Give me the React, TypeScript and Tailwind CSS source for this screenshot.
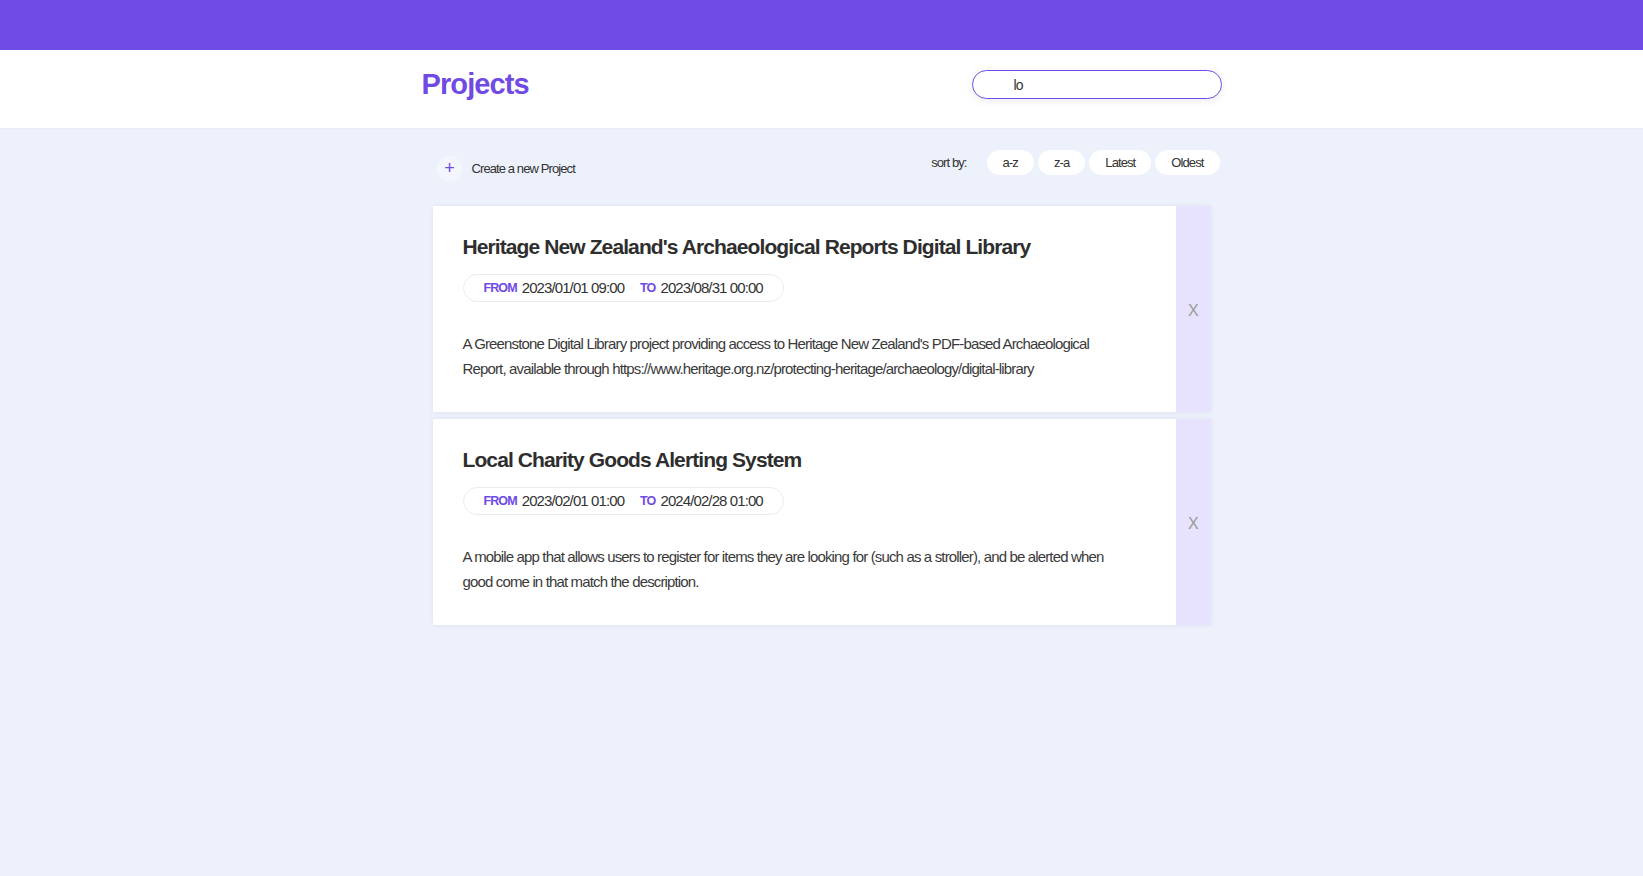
import React, { useState } from 'react';

type Project = {
  id: number;
  title: string;
  from: string;
  to: string;
  description: string;
};

const projects: Project[] = [
  {
    id: 1,
    title: "Heritage New Zealand's Archaeological Reports Digital Library",
    from: '2023/01/01 09:00',
    to: '2023/08/31 00:00',
    description:
      "A Greenstone Digital Library project providing access to Heritage New Zealand's PDF-based Archaeological Report, available through https://www.heritage.org.nz/protecting-heritage/archaeology/digital-library",
  },
  {
    id: 2,
    title: 'Local Charity Goods Alerting System',
    from: '2023/02/01 01:00',
    to: '2024/02/28 01:00',
    description:
      'A mobile app that allows users to register for items they are looking for (such as a stroller), and be alerted when good come in that match the description.',
  },
];

const sortOptions = ['a-z', 'z-a', 'Latest', 'Oldest'];

const ProjectCard: React.FC<{ project: Project }> = ({ project }) => (
  <div className="flex bg-white shadow-[0_0_5px_rgba(0,0,0,0.07)]">
    <div className="flex-1 pt-[30px] pb-[31px] pl-[30px] pr-[55px]">
      <h2 className="text-[21px] leading-[22px] font-bold text-[#2e2e2e]">{project.title}</h2>
      <div className="mt-[16px] inline-flex h-[28px] items-center rounded-full border border-[#ececf0] pl-[20px] pr-[20px] text-[15px] text-[#333]">
        <span className="text-[12.5px] font-bold text-[#6f4ae5] mr-[5px]">FROM</span>
        <span>{project.from}</span>
        <span className="text-[12.5px] font-bold text-[#6f4ae5] ml-[16px] mr-[5px]">TO</span>
        <span>{project.to}</span>
      </div>
      <p className="mt-[29px] text-[15px] leading-[25px] tracking-[-0.85px] text-[#3a3a3a]">
        {project.description}
      </p>
    </div>
    <button className="w-[35px] flex items-center justify-center pt-[3px] bg-[#e7e2fd] text-[16px] text-[#9a9a9a]">
      X
    </button>
  </div>
);

const App: React.FC = () => {
  const [query, setQuery] = useState('lo');

  return (
    <div className="min-h-screen bg-[#ecf1fc] font-['Liberation_Sans',Arial,sans-serif] tracking-[-0.9px]">
      {/* Top bar */}
      <div className="h-[50px] bg-[#704be6]" />

      {/* Header */}
      <div className="bg-white border-b border-[#e9ecf3]">
        <div className="mx-auto w-[800px] h-[78px] pb-[9px] flex items-center justify-between">
          <h1 className="text-[29px] font-bold text-[#6f4ae5]">Projects</h1>
          <input
            value={query}
            onChange={(e) => setQuery(e.target.value)}
            className="w-[250px] h-[29px] rounded-full border border-[#6f4ae5] pl-[41px] pr-4 text-[14px] text-[#333] outline-none shadow-[0_2px_8px_rgba(0,0,0,0.08)]"
          />
        </div>
      </div>

      {/* Toolbar */}
      <div className="mx-auto w-[800px] pt-[21px] flex items-start justify-between">
        <button className="mt-[6px] ml-[15px] flex items-center gap-[10px] text-[13px] text-[#333]">
          <span className="w-[25px] h-[25px] rounded-full bg-[#f4f6fd] flex items-center justify-center text-[#6f4ae5] text-[18px] leading-none pb-[2px]">
            +
          </span>
          Create a new Project
        </button>
        <div className="flex items-center mr-[2px]">
          <span className="text-[13px] text-[#333] mr-[20px]">sort by:</span>
          <div className="flex gap-[4px]">
            {sortOptions.map((opt) => (
              <button
                key={opt}
                className="h-[25px] px-[16px] rounded-full bg-white text-[13px] text-[#333]"
              >
                {opt}
              </button>
            ))}
          </div>
        </div>
      </div>

      {/* Project list */}
      <div className="mx-auto w-[800px] mt-[25px] px-[11px] flex flex-col gap-[7px]">
        {projects.map((p) => (
          <ProjectCard key={p.id} project={p} />
        ))}
      </div>
    </div>
  );
};

export default App;
